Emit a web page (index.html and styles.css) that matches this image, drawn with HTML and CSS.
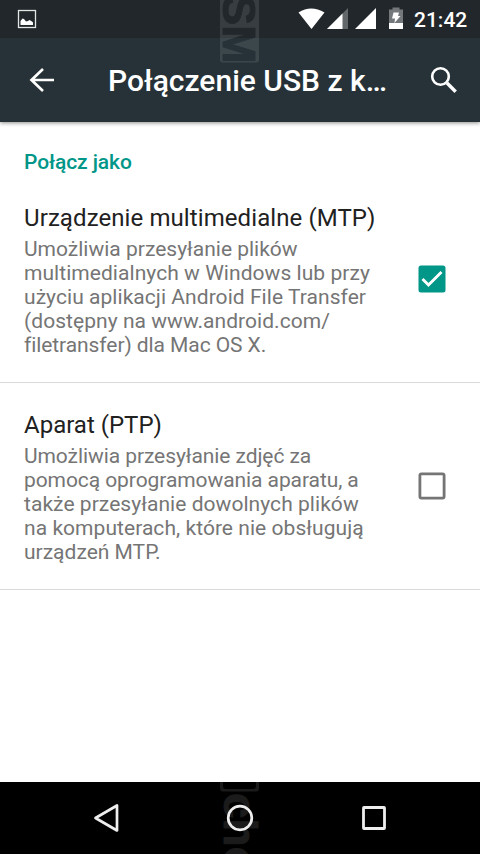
FILE: index.html
```
<!DOCTYPE html>
<html lang="pl">
<head>
<meta charset="utf-8">
<title>Połączenie USB z komputerem</title>
<link rel="stylesheet" href="styles.css">
</head>
<body>
<div class="screen">
  <header class="top">
    <div class="status">
      <svg class="status-picture" width="20" height="20" viewBox="0 0 20 20"><rect x="1.500" y="1.500" width="17" height="17" fill="none" stroke="#e4e5e5" stroke-width="1.300"/><path d="M3.500 16v-4l2-2.500 1.500.5 2 2.500 2-.5 1.500-1 2.500 1.500 1 1V16z" fill="#fff"/></svg>
      <svg class="status-signals" width="114" height="24" viewBox="0 0 114 24">
        <path d="M0.500 4.500Q13-3.500 26.500 4.500L13.500 21z" fill="#fff"/>
        <path d="M50 0v21H29z" fill="#62676a"/><path d="M44.500 5.500V21H29z" fill="#fff"/>
        <path d="M78 0v21H57z" fill="#fff"/>
        <path d="M94.500-.5h7v2h3.500v14H91v-14h3.500z" fill="#74787b"/><path d="M91 15h14v6H91z" fill="#fff"/>
        <path d="M95.500 4.500h5.500l-1 3.500h2.500l-6 7 .5-4.500h-3z" fill="#fff"/>
      </svg>
      <span class="clock">21:42</span>
    </div>
    <div class="toolbar">
      <svg class="back" width="26" height="26" viewBox="0 0 26 26"><path d="M14 2L2.500 13l11.500 11M2.500 13H25" fill="none" stroke="#fff" stroke-width="2.700"/></svg>
      <h1 class="title">Połączenie USB z k…</h1>
      <svg class="search" width="28" height="28" viewBox="0 0 28 28"><circle cx="10.500" cy="10.500" r="8.300" fill="none" stroke="#fff" stroke-width="2.600"/><path d="M17 17l8.700 8.700" stroke="#fff" stroke-width="3.400"/></svg>
    </div>
    <svg class="mark" width="40" height="63" viewBox="0 0 40 63">
      <mask id="top-letters"><rect width="40" height="63" fill="#fff"/><text class="mark-text" transform="translate(3 -5.500) rotate(90)" fill="#000" stroke="#000">SM</text></mask>
      <rect y="-6" width="39" height="68.500" rx="3" fill="#fff" opacity=".1" mask="url(#top-letters)"/>
    </svg>
  </header>
  <main class="content">
    <h2 class="section">Połącz jako</h2>
    <section class="item">
      <div class="copy">
        <h3 class="name wide">Urządzenie multimedialne (MTP)</h3>
        <p class="summary">Umożliwia przesyłanie plików<br><span class="loose">multimedialnych w Windows lub przy</span><br><span class="loose">użyciu aplikacji Android File Transfer</span><br><span class="loose">(dostępny na www.android.com/</span><br><span class="tight">filetransfer) dla Mac OS X.</span></p>
      </div>
      <svg class="check" width="28" height="28" viewBox="0 0 28 28"><rect x=".5" y=".5" width="27" height="27" rx="2.500" fill="#009688"/><path d="M4.500 14l6 6L23.500 7" fill="none" stroke="#fff" stroke-width="2.900"/></svg>
    </section>
    <section class="item">
      <div class="copy">
        <h3 class="name">Aparat (PTP)</h3>
        <p class="summary"><span class="tight">Umożliwia przesyłanie zdjęć za</span><br><span class="tight">pomocą oprogramowania aparatu, a</span><br><span class="loose">także przesyłanie dowolnych plików</span><br><span class="loose">na komputerach, które nie obsługują</span><br>urządzeń MTP.</p>
      </div>
      <svg class="check" width="28" height="28" viewBox="0 0 28 28"><rect x="1.900" y="1.900" width="24.200" height="24.200" rx="1.500" fill="none" stroke="#757575" stroke-width="2.800"/></svg>
    </section>
  </main>
  <nav class="nav">
    <svg class="mark" width="40" height="72" viewBox="0 0 40 72">
      <path d="M0 0H3V4Q3 7 6 7H33Q36 7 36 4V0H39V6.500Q39 9.500 36 9.500H3Q0 9.500 0 6.500z" fill="#1b1b1b"/>
      <text class="mark-text" transform="translate(3.500 11) rotate(90)" fill="#1b1b1b" stroke="#1b1b1b">cho</text>
    </svg>
    <svg class="nav-icon" width="28" height="30" viewBox="0 0 28 30"><path d="M25 2.500v25L3.500 15z" fill="none" stroke="#eee" stroke-width="2.700" stroke-linejoin="round"/></svg>
    <svg class="nav-icon" width="28" height="30" viewBox="0 0 28 30"><circle cx="14" cy="15" r="11.800" fill="none" stroke="#eee" stroke-width="2.700"/></svg>
    <svg class="nav-icon" width="28" height="30" viewBox="0 0 28 30"><rect x="3.500" y="4.500" width="21" height="21" rx=".5" fill="none" stroke="#eee" stroke-width="2.800" stroke-linejoin="round"/></svg>
  </nav>
</div>
</body>
</html>
```
FILE: styles.css
```
* { box-sizing: border-box; }
body { margin: 0; background: #fff; font-family: Roboto, sans-serif; }
h1, h2, h3, p { margin: 0; }
svg { display: block; flex: none; }
.screen { width: 480px; height: 854px; display: flex; flex-direction: column; overflow: hidden; }
.top { position: relative; background: #263238; box-shadow: 0 1px 4px rgba(0,0,0,.45); }
.status { height: 38px; background: #21272b; display: flex; align-items: flex-start; padding: 8px 12px 0 17px; }
.status-picture { margin-top: 1px; }
.status-signals { margin-left: auto; margin-right: 1px; overflow: visible; }
.clock { color: #fff; font-size: 21px; font-weight: 500; line-height: 24px; margin-left: 1px; width: 54px; white-space: nowrap; }
.toolbar { height: 84px; display: flex; align-items: center; padding: 0 22px 0 29px; }
.title { flex: 1; margin-left: 53px; padding-top: 2px; color: #fff; font-size: 30px; font-weight: 500; line-height: 36px; white-space: nowrap; }
.mark { position: absolute; left: 220px; top: 0; }
.mark-text { font: bold 46px "Liberation Sans", sans-serif; stroke-width: 1px; }
.content { flex: 1; }
.section { height: 54px; padding: 27px 24px 0; color: #009688; font-size: 21px; font-weight: 500; line-height: 26px; letter-spacing: -.1px; }
.item { height: 207px; border-bottom: 1px solid #dadada; display: flex; justify-content: space-between; padding: 26px 34px 0 24px; }
.name { color: #212121; font-size: 24px; font-weight: 400; line-height: 32px; white-space: nowrap; }
.wide { letter-spacing: .09px; }
.summary { margin-top: 3px; color: #757575; font-size: 21px; line-height: 24px; white-space: nowrap; }
.loose { letter-spacing: .05px; }
.tight { letter-spacing: -.08px; }
.check { margin-top: 63px; }
.nav { position: relative; height: 72px; background: #000; display: flex; align-items: center; justify-content: center; gap: 106px; }
.nav-icon { position: relative; }
```
